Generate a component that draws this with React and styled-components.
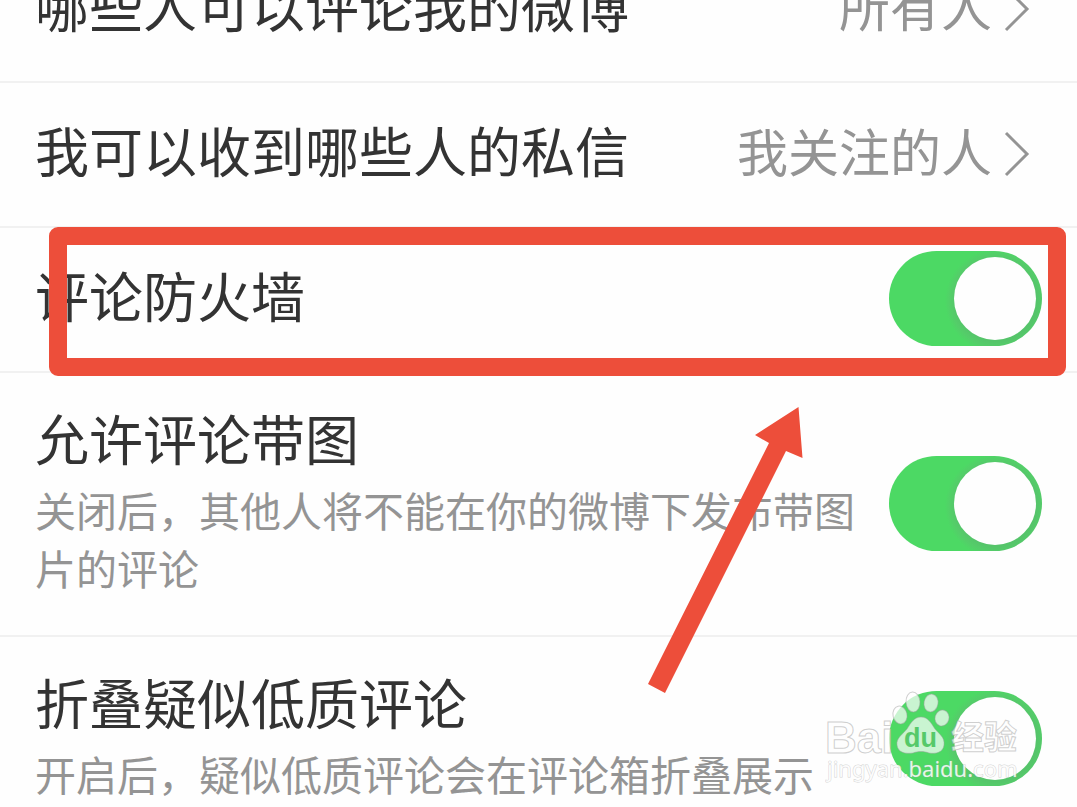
import { useState } from "react";
import styled, { createGlobalStyle } from "styled-components";

export default function App() {
  return (
    <>
      <GlobalStyle />
      <Settings>
        <LinkRow label="哪些人可以评论我的微博" value="所有人" />
        <LinkRow label="我可以收到哪些人的私信" value="我关注的人" />
        <SwitchRow id="firewall" label="评论防火墙">
          <Highlight />
        </SwitchRow>
        <SwitchRow
          id="pictures"
          label="允许评论带图"
          description="关闭后，其他人将不能在你的微博下发布带图片的评论"
        >
          <Arrow viewBox="0 0 156 287" aria-hidden="true">
            <path d="M150.500 0L154.500 51L138 44L17 286L0 277L121 36L107 28Z" />
          </Arrow>
        </SwitchRow>
        <SwitchRow
          id="fold"
          label="折叠疑似低质评论"
          description="开启后，疑似低质评论会在评论箱折叠展示"
        >
          <Watermark />
        </SwitchRow>
      </Settings>
    </>
  );
}

function LinkRow({ label, value }) {
  return (
    <RowLink href="#">
      <Texts>
        <Title as="span">{label}</Title>
      </Texts>
      <Value>{value}</Value>
      <Chevron viewBox="0 0 26 46" aria-hidden="true">
        <path d="M2 2L23 23L2 44" />
      </Chevron>
    </RowLink>
  );
}

function SwitchRow({ id, label, description, children }) {
  const [on, setOn] = useState(true);

  return (
    <Row>
      <Texts>
        <Title htmlFor={id}>{label}</Title>
        {description && <Description>{description}</Description>}
      </Texts>
      <Switch
        id={id}
        type="checkbox"
        role="switch"
        checked={on}
        onChange={() => setOn(!on)}
      />
      {children}
    </Row>
  );
}

function Watermark() {
  return (
    <Mark viewBox="0 0 200 100">
      <g className="brand">
        <text x="0" y="66" className="bai">
          Bai
        </text>
        <ellipse cx="75" cy="28" rx="7" ry="9" transform="rotate(-12 75 28)" />
        <ellipse cx="88" cy="15" rx="7" ry="10" transform="rotate(-4 88 15)" />
        <ellipse cx="106" cy="16" rx="7" ry="9" transform="rotate(10 106 16)" />
        <ellipse cx="117" cy="31" rx="7" ry="8" transform="rotate(16 117 31)" />
        <path d="M96 30C103 30 106 36 110 42C114 47 120 50 119 58C118 66 110 67 104 66C99 64 93 64 88 66C81 67 73 66 72 58C71 51 78 47 82 42C86 36 89 30 96 30Z" />
        <text x="126" y="62" className="cjk">
          经验
        </text>
      </g>
      <text x="79" y="60" className="du">
        du
      </text>
      <text x="2" y="90" className="site">
        jingyan.baidu.com
      </text>
    </Mark>
  );
}

const GlobalStyle = createGlobalStyle`
  * {
    box-sizing: border-box;
  }
  body {
    margin: 0;
    overflow: hidden;
    background-color: #fefefe;
    font-family: "Noto Sans CJK SC", sans-serif;
  }
`;

const Settings = styled.main`
  display: flex;
  flex-direction: column;
  margin-top: -62px;
`;

const Row = styled.section`
  position: relative;
  display: flex;
  align-items: center;
  justify-content: space-between;
  gap: 32px;
  padding: 23px 35px 25px;
  border-bottom: 2px solid #f1f1f1;
`;

const RowLink = styled.a`
  display: flex;
  align-items: center;
  justify-content: space-between;
  gap: 12px;
  padding: 25px 47px 26px 35px;
  border-bottom: 2px solid #f1f1f1;
  text-decoration: none;
`;

const Texts = styled.div`
  display: flex;
  flex: 1;
  flex-direction: column;
  gap: 6px;
  padding: 6px 0 14px;
`;

const Title = styled.label`
  font-size: 54px;
  line-height: 72px;
  color: #333333;
`;

const Description = styled.p`
  margin: 0;
  font-size: 41px;
  line-height: 58px;
  color: #949494;
`;

const Value = styled.span`
  padding: 6px 0 14px;
  font-size: 51px;
  line-height: 72px;
  color: #949494;
`;

const Chevron = styled.svg`
  flex: none;
  width: 26px;
  height: 46px;
  fill: none;
  stroke: #949494;
  stroke-width: 3;
`;

const Switch = styled.input`
  position: relative;
  flex: none;
  width: 153px;
  height: 95px;
  margin: 0;
  appearance: none;
  border-radius: 48px;
  background: radial-gradient(
      circle at 108px 50px,
      #55c46a 40px,
      #54cd69 46px,
      #4cd964 52px
    )
    #4cd964;

  &::before {
    content: "";
    position: absolute;
    top: 6px;
    right: 6px;
    width: 82px;
    height: 83px;
    border-radius: 50%;
    background-color: #fefefe;
  }

  &:not(:checked) {
    background: #e5e5e5;
  }

  &:not(:checked)::before {
    right: auto;
    left: 6px;
  }
`;

const Highlight = styled.div`
  position: absolute;
  top: -1px;
  right: 11px;
  bottom: -5px;
  left: 49px;
  border: 18px solid #ed4e3a;
  border-radius: 9px;
  pointer-events: none;
`;

const Arrow = styled.svg`
  position: absolute;
  top: 34px;
  right: 273px;
  z-index: 1;
  width: 156px;
  height: 287px;
  fill: #ed4e3a;
  pointer-events: none;
`;

const Mark = styled.svg`
  position: absolute;
  top: 50px;
  right: 52px;
  width: 200px;
  height: 100px;
  font-family: "Liberation Sans", sans-serif;
  pointer-events: none;

  .brand {
    fill: rgba(255, 255, 255, 0.7);
    stroke: rgba(160, 160, 160, 0.5);
    stroke-width: 1;
  }
  .bai {
    font-size: 44px;
    font-weight: 700;
  }
  .cjk {
    font-family: "Noto Sans CJK SC", sans-serif;
    font-size: 33px;
    font-weight: 700;
  }
  .du {
    fill: #55c969;
    font-size: 27px;
    font-weight: 700;
  }
  .site {
    fill: rgba(255, 255, 255, 0.85);
    stroke: rgba(160, 160, 160, 0.45);
    stroke-width: 1;
    paint-order: stroke;
    font-family: "Noto Sans", sans-serif;
    font-size: 22px;
  }
`;
